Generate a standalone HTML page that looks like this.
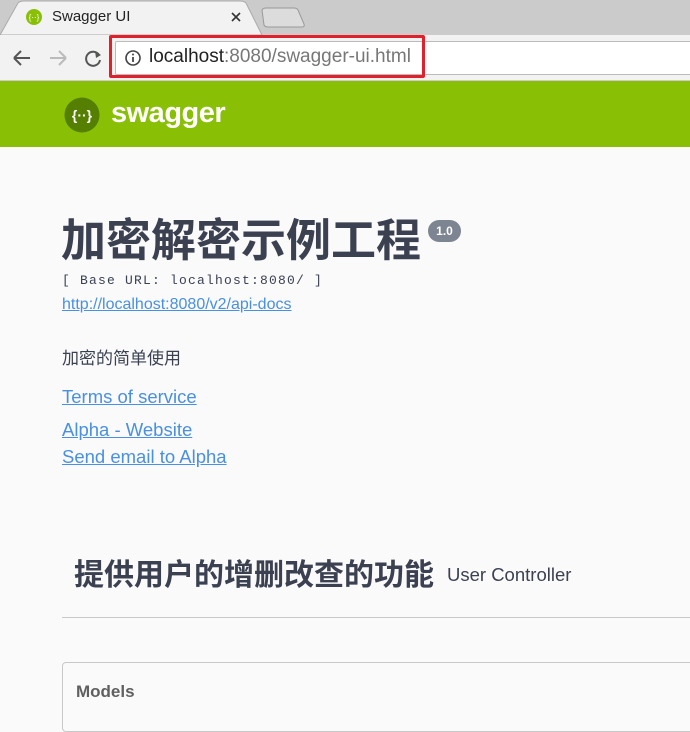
<!DOCTYPE html>
<html><head><meta charset="utf-8"><style>
*{margin:0;padding:0;box-sizing:border-box}
body{width:690px;height:719px;overflow:hidden;background:#fafafa;font-family:"Liberation Sans","Noto Sans CJK SC",sans-serif;position:relative}
.abs{position:absolute}
a{color:#4990e2;text-decoration:underline}
</style></head><body>
<div class="abs" style="left:0;top:0;width:690px;height:35px;background:#cbcbcb"></div>
<svg class="abs" style="left:0;top:0" width="320" height="36">
<path d="M0 35 L18 3 Q20 1 24 1 L240 1 Q244 1 246 3 L262 35 Z" fill="#f2f2f2" stroke="#aaa"/>
<path d="M262 10 Q263 8 266 8 L294 8 Q297 8 298 10 L304 24 Q305 27 302 27 L268 27 Q265 27 264 25 Z" fill="#dcdcdc" stroke="#999"/>
<circle cx="34" cy="17" r="8" fill="#89bf04"/><text x="34" y="20" font-size="8" fill="#fff" text-anchor="middle" font-family="Liberation Sans">{··}</text>
<path d="M232 13 L240 21 M240 13 L232 21" stroke="#333" stroke-width="1.6"/>
</svg>
<div class="abs" style="left:52px;top:8px;font-size:15px;color:#222">Swagger UI</div>
<div class="abs" style="left:0;top:35px;width:690px;height:46px;background:#f2f2f2;border-bottom:1px solid #ccc"></div>
<svg class="abs" style="left:10px;top:46px" width="95" height="24">
<path d="M4 12 H20 M4 12 L11 5 M4 12 L11 19" stroke="#555" stroke-width="2" fill="none"/>
<path d="M40 12 H56 M56 12 L49 5 M56 12 L49 19" stroke="#bbb" stroke-width="2" fill="none"/>
<path d="M89 9 A7 7 0 1 0 90 14" stroke="#555" stroke-width="2" fill="none"/><path d="M85 5 L91 9 L86 12Z" fill="#555"/>
</svg>
<div class="abs" style="left:115px;top:41px;width:580px;height:34px;background:#fff;border:1px solid #bbb;border-radius:2px"></div>
<div class="abs" style="left:109px;top:35px;width:316px;height:43px;border:3px solid #e0202a;border-radius:2px"></div>
<svg class="abs" style="left:124px;top:49px" width="18" height="18"><circle cx="9" cy="9" r="7" fill="none" stroke="#444" stroke-width="1.6"/><path d="M9 8 V13" stroke="#444" stroke-width="1.8"/><circle cx="9" cy="5.5" r="1" fill="#444"/></svg>
<div class="abs" style="left:149px;top:46px;font-size:19px;color:#222">localhost<span style="color:#777">:8080/swagger-ui.html</span></div>
<div class="abs" style="left:0;top:81px;width:690px;height:66px;background:#89bf04"></div>
<svg class="abs" style="left:64px;top:97px" width="36" height="36"><circle cx="18" cy="18" r="17.5" fill="#547f00"/><text x="18" y="23" font-size="14" font-weight="bold" fill="#fff" text-anchor="middle" font-family="Liberation Sans">{··}</text></svg>
<div class="abs" style="left:111px;top:97px;font-size:29px;font-weight:bold;color:#fff;letter-spacing:-0.5px">swagger</div>
<div class="abs" style="left:61px;top:212px;font-size:45px;font-weight:bold;color:#3b4151;line-height:58px">加密解密示例工程</div>
<div class="abs" style="left:428px;top:220px;width:33px;height:22px;border-radius:11px;background:#7d8492;color:#fff;font-size:12px;font-weight:bold;text-align:center;line-height:22px">1.0</div>
<div class="abs" style="left:62px;top:273px;font-family:'Liberation Mono',monospace;font-size:13px;letter-spacing:1.2px;color:#3b4151">[ Base URL: localhost:8080/ ]</div>
<a class="abs" style="left:62px;top:296px;font-size:16px">http://localhost:8080/v2/api-docs</a>
<div class="abs" style="left:62px;top:344px;font-size:17px;color:#3b4151">加密的简单使用</div>
<a class="abs" style="left:62px;top:386px;font-size:18.5px">Terms of service</a>
<a class="abs" style="left:62px;top:419px;font-size:18.5px">Alpha - Website</a>
<a class="abs" style="left:62px;top:446px;font-size:18.5px">Send email to Alpha</a>
<div class="abs" style="left:74px;top:556px;font-size:30px;font-weight:bold;color:#3b4151;line-height:40px">提供用户的增删改查的功能</div>
<div class="abs" style="left:447px;top:564px;font-size:18.5px;color:#3b4151">User Controller</div>
<div class="abs" style="left:62px;top:617px;width:640px;height:1px;background:#c8c8c8"></div>
<div class="abs" style="left:62px;top:662px;width:640px;height:70px;border:1px solid #c8c8c8;border-radius:4px"></div>
<div class="abs" style="left:76px;top:682px;font-size:17px;font-weight:bold;color:#606060">Models</div>
</body></html>
